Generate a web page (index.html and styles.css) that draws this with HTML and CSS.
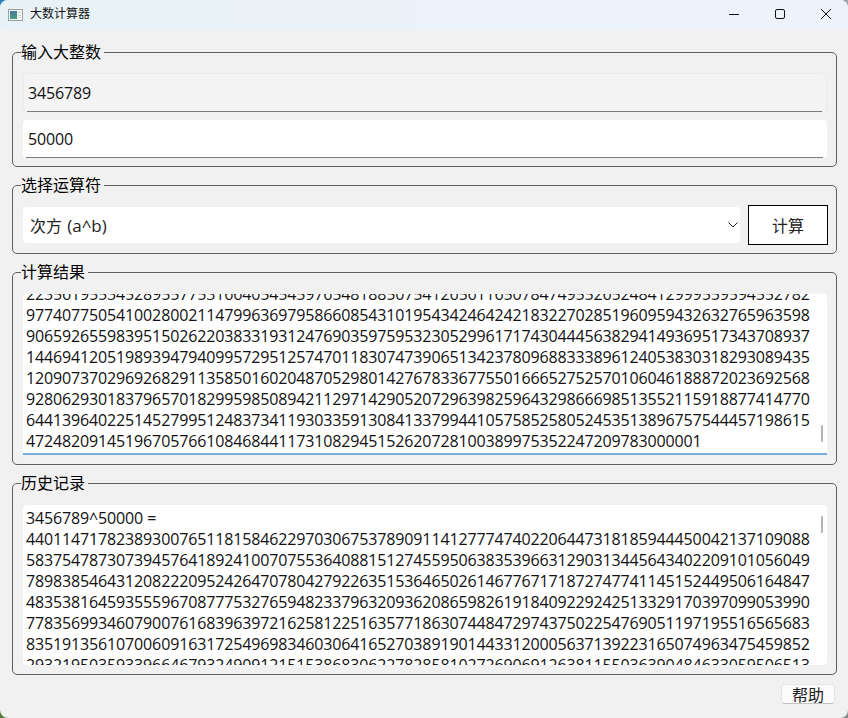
FILE: index.html
```html
<!DOCTYPE html>
<html lang="zh">
<head>
<meta charset="utf-8">
<title>大数计算器</title>
<link rel="stylesheet" href="styles.css">
</head>
<body>
<div class="window">
  <header class="titlebar">
    <svg class="app-icon" width="15" height="12" viewBox="0 0 15 12">
      <defs>
        <linearGradient id="pane" x1="0" y1="0" x2="0" y2="1">
          <stop offset="0" stop-color="#47789f"/>
          <stop offset="1" stop-color="#47a07c"/>
        </linearGradient>
      </defs>
      <rect x="0.5" y="0.5" width="14" height="11" fill="#f4f6f6" stroke="#9a9ea1"/>
      <rect x="2" y="2" width="7" height="8" fill="url(#pane)"/>
      <rect x="10" y="3" width="3" height="1" fill="#b9cdb9"/>
      <rect x="10" y="6" width="3" height="1" fill="#c9d9c4"/>
      <rect x="10" y="8" width="3" height="1" fill="#d5ddcf"/>
    </svg>
    <span class="title">大数计算器</span>
    <div class="controls">
      <svg class="ctl" width="46" height="30" viewBox="0 0 46 30"><path d="M18 14.5h10" stroke="#111" fill="none"/></svg>
      <svg class="ctl" width="46" height="30" viewBox="0 0 46 30"><rect x="18.5" y="9.5" width="9" height="9" rx="1.5" stroke="#111" fill="none"/></svg>
      <svg class="ctl" width="46" height="30" viewBox="0 0 46 30"><path d="M18 9l10 10M28 9l-10 10" stroke="#111" fill="none"/></svg>
    </div>
  </header>
  <main class="content">
    <fieldset class="group group-input">
      <legend>输入大整数</legend>
      <div class="field field-off"><input class="field-input" type="text" value="3456789"></div>
      <div class="field"><input class="field-input" type="text" value="50000"></div>
    </fieldset>
    <fieldset class="group group-op">
      <legend>选择运算符</legend>
      <div class="op-row">
        <div class="combo">
          <span>次方 <span class="op-latin">(a^b)</span></span>
          <svg width="10" height="6" viewBox="0 0 10 6"><path d="M0.5 0.5L5 5l4.5-4.5" stroke="#222" fill="none"/></svg>
        </div>
        <button class="calc" type="button">计算</button>
      </div>
    </fieldset>
    <fieldset class="group group-result">
      <legend>计算结果</legend>
      <div class="textbox result">
        <div class="line">223561955345289557753166405454597654818850754126561165078474955265248412999559594552782</div>
        <div class="line">977407750541002800211479963697958660854310195434246424218322702851960959432632765963598</div>
        <div class="line">906592655983951502622038331931247690359759532305299617174304445638294149369517343708937</div>
        <div class="line">144694120519893947940995729512574701183074739065134237809688333896124053830318293089435</div>
        <div class="line">120907370296926829113585016020487052980142767833677550166652752570106046188872023692568</div>
        <div class="line">928062930183796570182995985089421129714290520729639825964329866698513552115918877414770</div>
        <div class="line">644139640225145279951248373411930335913084133799441057585258052453513896757544457198615</div>
        <div class="line">472482091451967057661084684411731082945152620728100389975352247209783000001</div>
        <div class="thumb thumb-result"></div>
      </div>
    </fieldset>
    <fieldset class="group group-history">
      <legend>历史记录</legend>
      <div class="textbox history">
        <div class="line">3456789^50000 =</div>
        <div class="line">440114717823893007651181584622970306753789091141277747402206447318185944450042137109088</div>
        <div class="line">583754787307394576418924100707553640881512745595063835396631290313445643402209101056049</div>
        <div class="line">789838546431208222095242647078042792263515364650261467767171872747741145152449506164847</div>
        <div class="line">483538164593555967087775327659482337963209362086598261918409229242513329170397099053990</div>
        <div class="line">778356993460790076168396397216258122516357718630744847297437502254769051197195516565683</div>
        <div class="line">835191356107006091631725496983460306416527038919014433120005637139223165074963475459852</div>
        <div class="line">293219503593396646793249091215153868306227828581027269069126381155036390484633059506513</div>
        <div class="thumb thumb-history"></div>
      </div>
    </fieldset>
    <div class="footer"><button class="help" type="button">帮助</button></div>
  </main>
</div>
</body>
</html>
```

FILE: styles.css
```css
* { box-sizing: border-box; }
html, body { margin: 0; height: 100%; }
body {
  background: conic-gradient(#9aa7ad 0 25%, #8a8f92 25% 50%, #4f7a3a 50% 75%, #2f7fb8 75%);
  font-family: "Open Sans", "Noto Sans CJK SC", sans-serif;
  font-size: 16px;
  color: #111;
  overflow: hidden;
}
.window {
  width: 848px;
  height: 718px;
  background: #f1f1f1;
  border-radius: 8px;
  overflow: hidden;
  display: flex;
  flex-direction: column;
}
.titlebar {
  height: 30px;
  flex: none;
  display: flex;
  align-items: center;
  padding-left: 8px;
  background: linear-gradient(90deg, #e8f2f6, #eef2fb);
}
.app-icon { margin-top: -1px; }
.title { margin-left: 7px; font-size: 12px; line-height: 16px; margin-top: -2px; }
.controls { margin-left: auto; display: flex; margin-right: -1px; }
.ctl { display: block; }
.content {
  flex: 1;
  display: flex;
  flex-direction: column;
  gap: 7px;
  padding: 11px 11px 0 12px;
}
.group {
  margin: 0;
  min-width: 0;
  padding: 10px 9px 8px 10px;
  border: 1px solid #5f5f5f;
  border-radius: 5px;
}
.group legend {
  margin-left: -2px;
  padding: 0 3px 0 0;
  line-height: 22px;
  color: #000;
}
.group-input { display: flex; flex-direction: column; gap: 8px; padding-bottom: 8px; }
.field {
  position: relative;
  height: 38px;
  background: #fff;
  border-radius: 4px;
}
.field::after {
  content: "";
  position: absolute;
  left: 3px;
  right: 4px;
  bottom: 0;
  height: 1px;
  background: #7c7c7c;
}
.field-off { height: 39px; background: #f4f4f4; border: 1px solid #ebebeb; }
.field-off::after { bottom: -1px; }
.field-input {
  display: block;
  width: 100%;
  height: 100%;
  border: 0;
  outline: 0;
  background: transparent;
  padding: 0 0 0 5px;
  font: 16px "Open Sans", "Noto Sans CJK SC", sans-serif;
  letter-spacing: -0.14px;
  color: #111;
}
.field-off .field-input { padding-left: 4px; }
.group-op { padding: 9px 8px 8px 10px; }
.op-row { display: flex; align-items: center; gap: 8px; height: 40px; }
.combo {
  flex: 1;
  height: 36px;
  background: #fff;
  border-radius: 4px;
  display: flex;
  align-items: center;
  justify-content: space-between;
  padding: 0 2px 0 7px;
  color: #222;
}
.op-latin { font-size: 17px; margin-left: 1px; }
.calc {
  width: 80px;
  height: 40px;
  background: #fff;
  border: 1px solid #000;
  border-radius: 0;
  padding: 0;
  font: 16px "Noto Sans CJK SC", sans-serif;
  color: #222;
}
.group-result { padding: 11px 9px 9px 10px; }
.group-history { padding: 11px 9px 9px 10px; }
.textbox {
  position: relative;
  height: 161px;
  background: #fff;
  border-radius: 4px 4px 0 0;
  overflow: hidden;
  display: flex;
  flex-direction: column;
  padding-left: 3px;
}
.result {
  justify-content: flex-end;
  border-bottom: 2px solid #78aedb;
  padding-bottom: 1px;
}
.history { height: 160px; padding-top: 3px; border-radius: 4px; }
.line {
  flex: none;
  line-height: 21px;
  height: 21px;
  white-space: nowrap;
  letter-spacing: -0.14px;
  color: #111;
}
.thumb {
  position: absolute;
  right: 4px;
  width: 2px;
  background: #b4b4b4;
  border-radius: 1px;
}
.thumb-result { bottom: 11px; height: 17px; }
.thumb-history { top: 11px; height: 17px; }
.footer { display: flex; justify-content: flex-end; padding: 2px 2px 0 0; }
.help {
  width: 54px;
  height: 20px;
  padding: 0;
  background: #fbfbfb;
  border: 1px solid #e6e6e6;
  border-bottom-color: #c4c4c4;
  border-radius: 4px;
  font: 16px/18px "Noto Sans CJK SC", sans-serif;
  color: #222;
}
```
